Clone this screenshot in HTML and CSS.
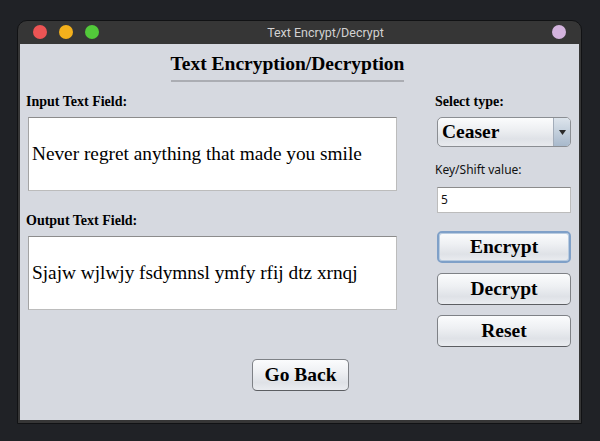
FILE: index.html
```html
<!DOCTYPE html>
<html>
<head>
<meta charset="utf-8">
<link rel="stylesheet" href="styles.css">
</head>
<body>
<div class="window">
  <div class="titlebar">
    <div class="lights">
      <span class="light red"></span>
      <span class="light yellow"></span>
      <span class="light green"></span>
    </div>
    <div class="title">Text Encrypt/Decrypt</div>
    <span class="light pink"></span>
  </div>
  <div class="content">
    <div class="heading-wrap"><h1 class="heading">Text Encryption/Decryption</h1></div>
    <div class="main">
      <div class="left">
        <div class="label">Input Text Field:</div>
        <div class="textbox">Never regret anything that made you smile</div>
        <div class="label label-out">Output Text Field:</div>
        <div class="textbox">Sjajw wjlwjy fsdymnsl ymfy rfij dtz xrnqj</div>
      </div>
      <div class="right">
        <div class="label">Select type:</div>
        <div class="select">
          <span class="select-text">Ceaser</span>
          <span class="select-arrow"><svg width="7" height="5" viewBox="0 0 7 5"><path d="M0 0H7L3.5 5Z" fill="#2a2a2a"/></svg></span>
        </div>
        <div class="key-label">Key/Shift value:</div>
        <div class="key-input">5</div>
        <div class="btn btn-focus first">Encrypt</div>
        <div class="btn">Decrypt</div>
        <div class="btn">Reset</div>
      </div>
    </div>
    <div class="bottom">
      <div class="btn goback">Go Back</div>
    </div>
  </div>
</div>
</body>
</html>
```
FILE: styles.css
```css
html, body {
  margin: 0;
  background: #202226;
}
body {
  padding: 20px 0 0 17px;
  height: 441px;
  box-sizing: border-box;
  overflow: hidden;
}
.window {
  width: 565px;
  box-sizing: border-box;
  border: 1px solid #111214;
  border-radius: 10px 10px 0 0;
  background: #363636;
  padding: 0 2px 3px 2px;
}
.titlebar {
  height: 23px;
  display: flex;
  align-items: center;
  padding: 0 13px 1px 13px;
  box-sizing: border-box;
}
.lights {
  display: flex;
  gap: 12px;
}
.light {
  width: 14px;
  height: 14px;
  border-radius: 50%;
  display: block;
}
.red { background: #ec5454; }
.yellow { background: #f3b01c; }
.green { background: #52c93a; }
.pink { background: #d3b3dd; }
.title {
  flex: 1;
  text-align: center;
  color: #d2d2d2;
  font-family: Roboto, "Noto Sans", sans-serif;
  font-size: 12.5px;
}
.content {
  background: #d6d9e0;
  height: 376px;
  font-family: "Liberation Serif", "Times New Roman", serif;
  color: #000;
}
.heading-wrap {
  padding-top: 8px;
  padding-right: 24px;
  text-align: center;
}
.heading {
  display: inline-block;
  margin: 0;
  font-size: 19.5px;
  font-weight: bold;
  line-height: 23px;
  padding-bottom: 5px;
  border-bottom: 2px solid #abadb3;
}
.main {
  display: flex;
  padding-left: 8px;
  margin-top: 12px;
}
.left {
  width: 369px;
  display: flex;
  flex-direction: column;
}
.right {
  width: 134px;
  margin-left: 40px;
  display: flex;
  flex-direction: column;
}
.label {
  font-size: 14px;
  font-weight: bold;
  line-height: 15px;
  margin-bottom: 8px;
  margin-left: -2px;
}
.label-out {
  margin-top: 22px;
}
.textbox {
  height: 74px;
  box-sizing: border-box;
  background: #fff;
  border: 1px solid #bcbcbc;
  border-top-color: #8c8c8c;
  border-left-color: #a4a4a4;
  padding: 0 3px;
  display: flex;
  align-items: center;
  font-size: 19.3px;
  white-space: nowrap;
}
.select {
  height: 30px;
  box-sizing: border-box;
  border: 1px solid #8b8e93;
  border-radius: 5px;
  background: linear-gradient(#fbfcfd, #eceef1 45%, #dfe2e7 75%, #e8eaee);
  display: flex;
  overflow: hidden;
}
.select-text {
  flex: 1;
  padding-left: 4px;
  font-size: 19.5px;
  font-weight: bold;
  line-height: 28px;
}
.select-arrow {
  width: 16px;
  border-left: 1px solid #a3adba;
  background: linear-gradient(#dde4ec, #c3cfdc 50%, #a8b9cc);
  display: flex;
  align-items: center;
  justify-content: center;
}
.key-label {
  margin-top: 15px;
  margin-left: -2px;
  font-family: "Noto Sans", "Open Sans", sans-serif;
  font-size: 12px;
  line-height: 16px;
  color: #111;
}
.key-input {
  margin-top: 9px;
  height: 26px;
  box-sizing: border-box;
  background: #fff;
  border: 1px solid #bcbcbc;
  border-top-color: #8c8c8c;
  padding-left: 3px;
  font-family: "Noto Sans", "Open Sans", sans-serif;
  font-size: 12px;
  line-height: 24px;
  color: #111;
}
.btn {
  height: 32px;
  box-sizing: border-box;
  border: 1px solid #7e8186;
  border-bottom-color: #5c5e62;
  border-radius: 5px;
  background: linear-gradient(#fbfcfd, #eef0f3 40%, #dfe2e7 75%, #eaecf0);
  display: flex;
  align-items: center;
  justify-content: center;
  font-size: 19.5px;
  font-weight: bold;
  margin-top: 10px;
}
.right .first {
  margin-top: 18px;
}
.btn-focus {
  border: 2px solid #7fa0c8;
  box-shadow: inset 0 0 0 1px #b8cbe0;
}
.bottom {
  display: flex;
  justify-content: center;
  padding-left: 2px;
}
.goback {
  width: 97px;
  margin-top: 12px;
}
```
